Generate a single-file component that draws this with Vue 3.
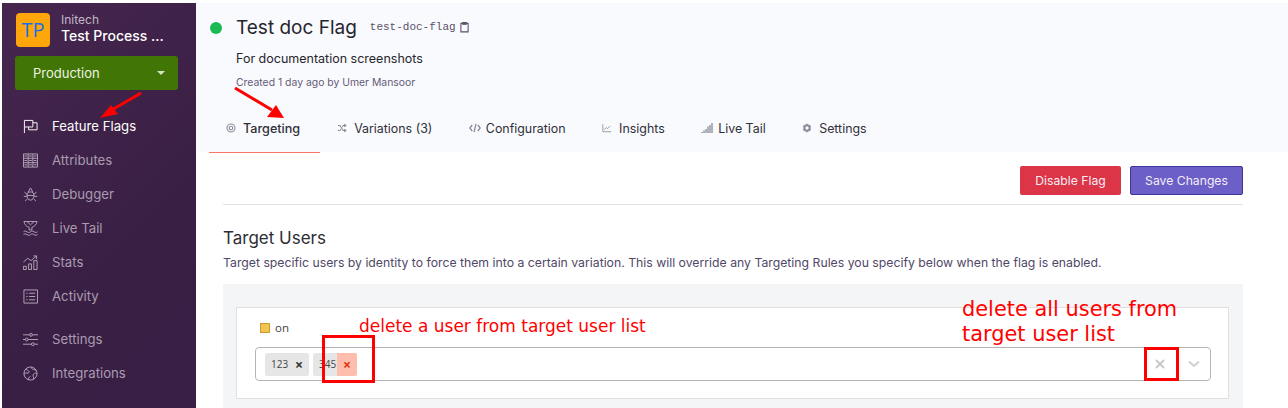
<script setup>
// outline icons for the sidebar, 16x16 grid
const navIcons = {
  flag: 'M1.5 15V1.500h9v7h-9M10.500 4h4.500v7.500H6V8.500',
  attr: 'M.5 1h15v14H.5zM.5 5.600h15M.5 10.300h15M1.500 3.200h3M6.500 3.200h3M11.500 3.200h3M1.500 8h3M6.500 8h3M11.500 8h3M1.500 12.600h3M6.500 12.600h3M11.500 12.600h3M5.500 1v14M10.500 1v14',
  bug: 'M4.200 9c0-2.400 1.600-3.800 3.800-3.800s3.800 1.400 3.800 3.800-1.500 5-3.800 5-3.800-2.600-3.800-5zM5.500 5.500 8 1l2.500 4.500M4.200 9h7.600M4.200 7.500 1.500 5.500M11.800 7.500l2.700-2M4 10H.8M12 10h3.200M4.800 12.500l-2.600 2.500M11.200 12.500l2.600 2.500',
  tail: 'M1 .5h14c-.5 3.500-3 5.500-5.500 6.200v2.800h-3V6.700C4 6 1.500 4 1 .5zM4 .5 8 4l4-3.500M.5 11.500c1.200-1 2.300-1 3.700 0s2.400 1 3.800 0 2.400-1 3.800 0 2.500 1 3.700 0M.5 14.500c1.200-1 2.300-1 3.700 0s2.400 1 3.800 0 2.400-1 3.800 0 2.500 1 3.700 0',
  stats: 'M.5 12h3v3.500h-3zM6 9.500h3v6H6zM11.500 6H15v9.500h-3.500zM.5 7.500 5 3.500 8.500 6l6-5M11 1h3.500v3.500',
  list: 'M1 1h14.500v14H1zM3.500 4.500H5M6.500 4.500H13M3.500 8H5M6.500 8H13M3.500 11.500H5M6.500 11.500H13',
  sliders: 'M0 3h7M10 3h6M0 8h2.500M5.500 8H16M0 13h9M12 13h4M7 3a1.500 1.500 0 1 0 3 0 1.500 1.500 0 1 0-3 0M2.500 8a1.500 1.500 0 1 0 3 0 1.500 1.500 0 1 0-3 0M9 13a1.500 1.500 0 1 0 3 0 1.500 1.500 0 1 0-3 0',
  globe: 'M1 8a7 7 0 1 0 14 0A7 7 0 1 0 1 8M3 3c1 2 3 1.500 3.500 3S4.500 8 3 7.500 1 9 1 9M9 1.200c-.5 1.500 1 2 2 2.500s2.500.2 2.800 1.300M14.800 8c-2-.8-3.500 0-4 1.500s1 2.500.5 4.500M6 15c-.5-2 .5-3.500 2-4'
}
const navTop = [
  { label: 'Feature Flags', icon: 'flag', active: true },
  { label: 'Attributes', icon: 'attr' },
  { label: 'Debugger', icon: 'bug' },
  { label: 'Live Tail', icon: 'tail' },
  { label: 'Stats', icon: 'stats' },
  { label: 'Activity', icon: 'list' }
]
const navBottom = [
  { label: 'Settings', icon: 'sliders' },
  { label: 'Integrations', icon: 'globe' }
]
const tabs = [
  { label: 'Targeting', icon: 'target', active: true },
  { label: 'Variations (3)', icon: 'shuffle' },
  { label: 'Configuration', icon: 'code', wide: true },
  { label: 'Insights', icon: 'chart' },
  { label: 'Live Tail', icon: 'signal', wide: true },
  { label: 'Settings', icon: 'gear' }
]
</script>

<template>
  <div class="page">
    <!-- sidebar -->
    <aside class="sidebar">
      <div class="brand">
        <div class="logo">TP</div>
        <div class="brand-text">
          <div class="org">Initech</div>
          <div class="project">Test Process ...</div>
        </div>
      </div>
      <div class="env">
        <span>Production</span>
        <i class="caret"></i>
      </div>
      <nav class="nav">
        <a v-for="item in navTop" :key="item.label" class="nav-item" :class="{ active: item.active }">
          <svg class="nav-icon" viewBox="0 0 16 16" fill="none" stroke="currentColor" stroke-width="1">
            <path :d="navIcons[item.icon]" />
          </svg>
          {{ item.label }}
        </a>
      </nav>
      <nav class="nav nav-bottom">
        <a v-for="item in navBottom" :key="item.label" class="nav-item">
          <svg class="nav-icon" viewBox="0 0 16 16" fill="none" stroke="currentColor" stroke-width="1">
            <path :d="navIcons[item.icon]" />
          </svg>
          {{ item.label }}
        </a>
      </nav>
    </aside>

    <main class="main">
      <!-- flag header -->
      <header class="head">
        <div class="title-row">
          <span class="dot"></span>
          <h1>Test doc Flag</h1>
          <code class="slug">test-doc-flag</code>
          <svg class="clip" viewBox="0 0 10 12" fill="none" stroke="#5a5068" stroke-width="1.200">
            <path d="M2.500 2H1v9.400h8V2H7.500" /><path d="M3 1h4v2H3z" fill="#5a5068" />
          </svg>
        </div>
        <p class="desc">For documentation screenshots</p>
        <p class="created">Created 1 day ago by Umer Mansoor</p>
        <div class="tabs">
          <a v-for="tab in tabs" :key="tab.label" class="tab" :class="{ active: tab.active }">
            <svg class="tab-icon" :class="{ wide: tab.wide }" viewBox="0 0 12 12" fill="none" stroke="#868d99" stroke-width="1.300">
              <template v-if="tab.icon === 'target'">
                <circle cx="6" cy="6" r="4.800" /><circle cx="6" cy="6" r="2.200" />
              </template>
              <template v-else-if="tab.icon === 'shuffle'">
                <path d="M1 3h2.500l4 6H10M1 9h2.500l1.200-1.800M6.300 4.800 7.500 3H10M8.800 1.300 10.600 3 8.800 4.700M8.800 7.300 10.600 9l-1.800 1.700" />
              </template>
              <template v-else-if="tab.icon === 'code'">
                <path d="M3.200 3 .8 6l2.400 3M8.800 3l2.400 3-2.400 3M7 1.800 5 10.200" />
              </template>
              <template v-else-if="tab.icon === 'chart'">
                <path d="M1 1.500v9h10M2.800 8l2.200-2.500 1.800 1.200L10 3.500" stroke-width="1" />
              </template>
              <template v-else-if="tab.icon === 'signal'">
                <path d="M1 11v-1M3 11V8.500M5 11V7M7 11V4.500M9 11V3M11 11V1" />
              </template>
              <template v-else>
                <circle cx="6" cy="6" r="3.200" stroke-width="2.400" />
                <path d="M6 .8v1.600M6 9.600v1.600M1.500 3.400l1.400.8M9.100 7.800l1.400.8M1.500 8.600l1.400-.8M9.100 4.200l1.400-.8" stroke-width="1.600" />
              </template>
            </svg>
            {{ tab.label }}
          </a>
        </div>
      </header>

      <div class="content">
        <div class="actions">
          <button class="btn btn-danger">Disable Flag</button>
          <button class="btn btn-primary">Save Changes</button>
        </div>
        <h2>Target Users</h2>
        <p class="help">Target specific users by identity to force them into a certain variation. This will override any Targeting Rules you specify below when the flag is enabled.</p>

        <section class="panel">
          <div class="card">
            <div class="legend"><i class="swatch"></i>on</div>
            <div class="select">
              <div class="tags">
                <span class="tag">
                  <span class="tag-label">123</span>
                  <span class="tag-x">×</span>
                </span>
                <span class="tag">
                  <span class="tag-label">345</span>
                  <span class="tag-x hot">×</span>
                </span>
              </div>
              <span class="clear">
                <svg viewBox="0 0 10 10" width="10" height="10" stroke="#c8c8c8" stroke-width="2"><path d="M1 1l8 8M9 1l-8 8" /></svg>
              </span>
              <span class="chev">
                <svg viewBox="0 0 12 8" width="12" height="8" fill="none" stroke="#cfcfcf" stroke-width="2"><path d="M1 1.500 6 6l5-4.500" /></svg>
              </span>
            </div>
          </div>
        </section>
      </div>
    </main>

    <!-- annotations drawn over the screenshot -->
    <svg class="marks" width="1288" height="408" viewBox="0 0 1288 408">
      <g stroke="#f00" fill="none" stroke-width="3">
        <path d="M141 93 110 111" />
        <path d="M235 88 272 110" />
        <rect x="323.500" y="336.500" width="50" height="45" />
        <rect x="1145.500" y="348.500" width="32" height="31" />
      </g>
      <g fill="#f00">
        <path d="M100 118 111 105 118 114z" />
        <path d="M284 118 276 105 267 117z" />
      </g>
    </svg>
    <div class="note note-a">delete a user from target user list</div>
    <div class="note note-b">delete all users from<br />target user list</div>
  </div>
</template>

<style>
html, body { margin: 0; background: #fff; }
</style>

<style scoped>
.page {
  position: relative;
  display: flex;
  width: 1288px;
  height: 408px;
  padding: 3px 0 0 2px;
  box-sizing: border-box;
  overflow: hidden;
  font-family: Inter, "Open Sans", sans-serif;
  color: #2b2b33;
}

.sidebar {
  width: 194px;
  flex: none;
  background: linear-gradient(135deg, #46264f 0%, #3a1f44 60%, #391e45 100%);
  padding: 10px 18px 0 13px;
  box-sizing: border-box;
}
.brand { display: flex; align-items: flex-start; gap: 11px; padding-left: 1px; }
.logo {
  width: 34px; height: 34px; border-radius: 4px; background: #ffa60a; color: #1a6fe8;
  font-size: 20px; line-height: 34px; text-align: center; font-family: "Open Sans", sans-serif;
}
.org { color: #c2b6c8; font-size: 12px; line-height: 14px; }
.project { color: #fff; font-size: 14px; font-weight: 500; line-height: 17px; white-space: nowrap; }
.env {
  display: flex; align-items: center; justify-content: space-between;
  height: 34px; margin-top: 9px; padding: 0 13px 0 18px;
  background: #417505; border-radius: 3px; color: #eef3e6; font-size: 13px;
}
.caret { border: 4px solid transparent; border-top: 4px solid #d7e3c8; border-bottom: 0; }

.nav { margin: 23px -18px 0 0; display: flex; flex-direction: column; gap: 8px; }
.nav-bottom { margin-top: 17px; }
.nav-item {
  display: flex; align-items: center; gap: 14px; height: 26px; padding-left: 8px;
  color: #a99bb0; font-size: 13.200px;
}
.nav-item.active { color: #fff; }
.nav-icon { width: 15px; height: 15px; flex: none; color: #b5a9bb; }
.nav-item.active .nav-icon { color: #fff; }

.main { flex: 1; min-width: 0; }
.head { background: #f9fafd; height: 149px; padding: 11px 0 0 14px; box-sizing: border-box; }
.title-row { display: flex; align-items: center; height: 26px; }
.dot { width: 12px; height: 12px; border-radius: 50%; background: #1db954; margin-right: 14px; margin-top: 2px; }
h1 { margin: 0; font-size: 19px; font-weight: 400; color: #26262e; }
.slug { margin-left: 13px; font-family: "Liberation Mono", monospace; font-size: 11px; color: #5a5068; }
.clip { width: 9px; height: 12px; margin-left: 4px; }
.desc { margin: 11px 0 0 26px; font-size: 12.500px; line-height: 16px; color: #26262e; }
.created { margin: 9px 0 0 26px; font-size: 10.400px; line-height: 14px; color: #675a7a; }

.tabs { display: flex; margin-top: 20px; margin-left: -1px; }
.tab {
  display: flex; align-items: center; gap: 7px; height: 43px; padding: 0 19.500px 6px 17px;
  font-size: 12.400px; color: #2f2f38; box-sizing: border-box;
  border-bottom: 1px solid transparent;
}
.tab.active { border-bottom-color: #f97462; font-weight: 500; font-size: 12.600px; padding-right: 20px; }
.tab-icon { width: 10px; height: 10px; flex: none; }
.tab-icon.wide { width: 12px; height: 12px; margin-right: -2px; }

.content { padding: 14px 45px 0 27px; }
.actions {
  display: flex; justify-content: flex-end; gap: 9px;
  padding-bottom: 9px; border-bottom: 1px solid #e2e2e8;
}
.btn {
  height: 29px; border-radius: 2px; font: 12.200px Inter, sans-serif; color: #f4eef5;
  padding: 0; border: 1px solid transparent;
}
.btn-danger { width: 101px; background: #dc3547; }
.btn-primary { width: 113px; background: #6c5fc7; border-color: #3f3598; }
h2 { margin: 23px 0 0; font-size: 17px; line-height: 20px; font-weight: 400; color: #2d2d35; }
.help { margin: 7px 0 0; font-size: 12.250px; line-height: 16px; color: #4f4868; white-space: nowrap; }

.panel { margin-top: 13px; background: #f4f5f7; height: 140px; padding: 23px 14px 0 13px; box-sizing: border-box; }
.card { background: #fff; border: 1px solid #e0e0e0; height: 92px; padding: 0 17px 0 18px; box-sizing: border-box; }
.legend {
  display: flex; align-items: center; gap: 5px; height: 39px; padding-left: 5px;
  font: 11.500px "Open Sans", sans-serif; color: #444;
}
.swatch { width: 8px; height: 8px; background: #f5c44f; border: 1px solid #c99c3a; }
.select {
  display: flex; align-items: center; height: 34px; border: 1px solid #b5b5b5; border-radius: 4px;
  padding-left: 9px; box-sizing: border-box;
}
.tags { flex: 1; display: flex; gap: 4px; }
.tag {
  display: flex; align-items: center; height: 23px; background: #e6e6e6; border-radius: 2px;
  font: 10px "Open Sans", sans-serif; color: #444; overflow: hidden;
}
.tag-label { padding-left: 6px; width: 24px; box-sizing: border-box; }
.tag-x { width: 20px; text-align: center; font-size: 14px; font-weight: 700; color: #333; line-height: 23px; }
.tag-x.hot { background: #ffbdad; color: #de350b; }
.clear { width: 32px; display: flex; justify-content: center; }
.chev { width: 33px; display: flex; justify-content: center; border-left: 1px solid #ddd; height: 20px; align-items: center; }

.marks { position: absolute; left: 0; top: 0; pointer-events: none; }
.note {
  position: absolute; color: #f00; font-family: "DejaVu Sans", sans-serif; line-height: 25px; white-space: nowrap;
}
.note-a { left: 359px; top: 314px; font-size: 17px; }
.note-b { left: 962px; top: 297px; font-size: 20.900px; }
</style>
